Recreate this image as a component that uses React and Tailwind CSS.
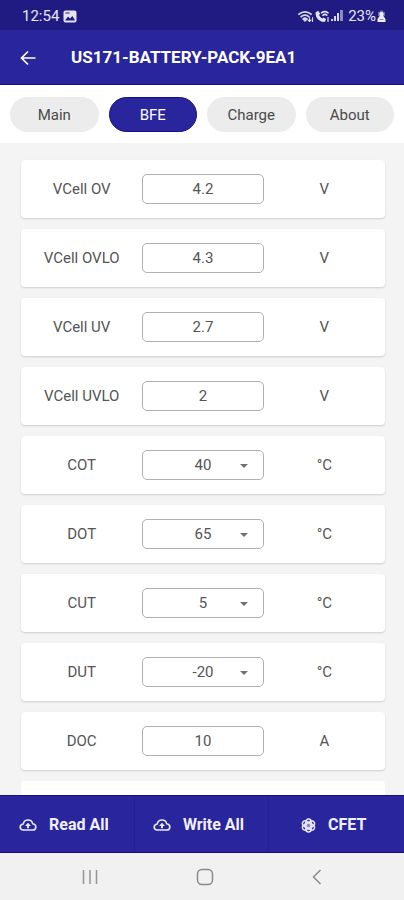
import React from "react";

const tabs = ["Main", "BFE", "Charge", "About"];

const settings = [
  { id: "vcell-ov", label: "VCell OV", value: "4.2", unit: "V" },
  { id: "vcell-ovlo", label: "VCell OVLO", value: "4.3", unit: "V" },
  { id: "vcell-uv", label: "VCell UV", value: "2.7", unit: "V" },
  { id: "vcell-uvlo", label: "VCell UVLO", value: "2", unit: "V" },
  { id: "cot", label: "COT", value: "40", unit: "°C", select: true },
  { id: "dot", label: "DOT", value: "65", unit: "°C", select: true },
  { id: "cut", label: "CUT", value: "5", unit: "°C", select: true },
  { id: "dut", label: "DUT", value: "-20", unit: "°C", select: true },
  { id: "doc", label: "DOC", value: "10", unit: "A" },
];

function PictureIcon() {
  return (
    <svg width="14" height="13" viewBox="0 0 14 13" aria-hidden="true">
      <rect x="0.5" y="0.5" width="13" height="12" rx="2" fill="#e4e3f4" />
      <path d="M2 10.5 5 6.5l2 2 2.5-2.5 2.5 4.5z" fill="#201b82" />
      <path d="M2.5 3h4" stroke="#201b82" strokeWidth="1" />
    </svg>
  );
}

function WifiIcon() {
  return (
    <svg width="16" height="13" viewBox="0 0 16 13" fill="none" stroke="#d9d8ee" strokeWidth="1.8" strokeLinecap="round" aria-hidden="true">
      <path d="M1 4.2C4.5 1 9.5 1 13 4.2" />
      <path d="M3.2 6.7c2.2-2 5.4-2 7.6 0" />
      <path d="M5.3 9c1-.9 2.4-.9 3.4 0L7 10.8z" fill="#d9d8ee" />
      <path d="M11.5 7.5v4M10 10l1.500 1.500L13 10M14.500 11.500v-4" strokeWidth="1.1" />
    </svg>
  );
}

function CallIcon() {
  return (
    <svg width="15" height="13" viewBox="0 0 15 13" fill="none" stroke="#e4e3f4" strokeLinecap="round" aria-hidden="true">
      <path d="M0.5 2.500 3.200 0.800 5.200 3.800 4 5.100c.7 1.500 1.700 2.500 3.200 3.300l1.400-1 2.600 1.900-1.300 2.500c-5 .8-9.700-4-9.400-9.300z" fill="#e4e3f4" stroke="none" />
      <path d="M6.5 2.800c2-1.500 4.500-1.500 6.500 0M8 5.200c1.100-.9 2.600-.9 3.700 0" strokeWidth="1.6" />
      <path d="M13 7.5v4" strokeWidth="1.2" />
    </svg>
  );
}

function SignalIcon() {
  return (
    <svg width="13" height="12" viewBox="0 0 13 12" aria-hidden="true">
      <rect x="0" y="9" width="2" height="2" fill="#d9d8ee" />
      <rect x="3" y="6" width="2" height="5" fill="#d9d8ee" />
      <rect x="6" y="3" width="2" height="8" fill="#d9d8ee" />
      <rect x="9" y="0" width="3" height="11" fill="#8d8abf" />
    </svg>
  );
}

function BatteryIcon() {
  return (
    <svg width="9" height="13" viewBox="0 0 9 13" aria-hidden="true">
      <path d="M3 0.5h3l.5 1.500h1.500v4H1V2h1.500z" fill="#6e6aae" />
      <path d="M4.5 2a2 2 0 0 1 1.500 3.500L8.500 9v3h-8V9L3 5.500a2 2 0 0 1 1.500-3.500z" fill="#eeeef8" />
      <path d="M2.5 9.5h4" stroke="#8d8abf" />
    </svg>
  );
}

function CloudUpIcon() {
  return (
    <svg width="18" height="14" viewBox="0 0 18 14" fill="none" aria-hidden="true">
      <path d="M4.5 12C2.500 12 1.200 10.700 1.200 9S2.500 6.200 4.200 6C4.700 3.500 6.500 2 9 2s4.200 1.400 4.700 3.800c1.900.2 3.100 1.500 3.100 3.100 0 1.800-1.300 3.100-3.300 3.100z" stroke="#e9e8f8" strokeWidth="1.6" strokeLinejoin="round" />
      <path d="M9 4.800 12 8h-2v2.200H8V8H6z" fill="#e9e8f8" />
    </svg>
  );
}

function AtomIcon() {
  return (
    <svg width="15" height="15" viewBox="0 0 14 14" fill="none" stroke="#e9e8f8" strokeWidth="1.4" aria-hidden="true">
      <circle cx="7" cy="7" r="4.5" fill="#8c89cf" stroke="none" />
      <rect x="4.6" y="0.9" width="4.8" height="12.2" rx="2.4" />
      <rect x="4.6" y="0.9" width="4.8" height="12.2" rx="2.4" transform="rotate(60 7 7)" />
      <rect x="4.6" y="0.9" width="4.8" height="12.2" rx="2.4" transform="rotate(120 7 7)" />
    </svg>
  );
}

function StatusBar() {
  return (
    <div className="flex h-[30px] shrink-0 items-center justify-between bg-[#201b82] pt-0.5 pr-[18px] pl-[22px] text-[#e9e8f8]">
      <div className="flex items-center gap-1">
        <span className="text-[15px]">12:54</span>
        <PictureIcon />
      </div>
      <div className="flex items-center gap-px">
        <WifiIcon />
        <CallIcon />
        <SignalIcon />
        <span className="pl-[3px] text-[15px]">23%</span>
        <BatteryIcon />
      </div>
    </div>
  );
}

function Header() {
  return (
    <header className="flex h-[55px] shrink-0 items-center border-b border-[#14108a] bg-[#29259c] pt-0.5 pl-5 text-white">
      <button type="button" aria-label="Back" className="w-[51px]">
        <svg width="16" height="16" viewBox="0 0 16 16" fill="none" stroke="#fff" strokeWidth="1.7" aria-hidden="true">
          <path d="M15.5 8H2M8 1.500 1.500 8 8 14.500" />
        </svg>
      </button>
      <h1 className="text-[17px] font-bold">US171-BATTERY-PACK-9EA1</h1>
    </header>
  );
}

function Tabs() {
  return (
    <nav className="grid shrink-0 grid-cols-4 gap-[10px] bg-white px-[10px] pt-3 pb-[11px]">
      {tabs.map((tab) => (
        <button
          key={tab}
          type="button"
          className={
            tab === "BFE"
              ? "h-[35px] rounded-full border border-[#14108a] bg-[#29259c] pt-0.5 text-[15px] text-white"
              : "h-[35px] rounded-full bg-[#ececec] pt-0.5 text-[15px] text-[#4a4a4a]"
          }
        >
          {tab}
        </button>
      ))}
    </nav>
  );
}

function SettingRow({ item }) {
  return (
    <div className="grid h-[58px] grid-cols-3 items-center rounded-[4px] bg-white text-center text-[15px] text-[#555] shadow-[0_1px_2px_rgba(0,0,0,0.16)]">
      <label htmlFor={item.id}>{item.label}</label>
      {item.select ? (
        <div className="relative">
          <select
            id={item.id}
            defaultValue={item.value}
            className="block h-[30px] w-full appearance-none rounded-[5px] border border-[#b0b0b0] bg-white text-center"
          >
            <option>{item.value}</option>
          </select>
          <svg className="pointer-events-none absolute top-[14px] right-4" width="8" height="4" viewBox="0 0 8 4" aria-hidden="true">
            <path d="M0 0h8L4 4z" fill="#6b7378" />
          </svg>
        </div>
      ) : (
        <input
          id={item.id}
          type="text"
          inputMode="decimal"
          defaultValue={item.value}
          className="block h-[30px] w-full rounded-[5px] border border-[#b0b0b0] bg-white text-center"
        />
      )}
      <span>{item.unit}</span>
    </div>
  );
}

function ActionBar() {
  return (
    <div className="grid h-[58px] shrink-0 grid-cols-3 border-y border-[#14108a] bg-[#29259c] text-base font-bold text-[#f1f0fb]">
      <button type="button" className="flex items-center justify-center gap-3 border-r border-[#241f96] pt-0.5 pr-1.5">
        <CloudUpIcon />
        Read All
      </button>
      <button type="button" className="flex items-center justify-center gap-3 border-r border-[#241f96] pt-0.5 pr-1.5">
        <CloudUpIcon />
        Write All
      </button>
      <button type="button" className="flex items-center justify-center gap-3 pt-0.5 pr-1.5">
        <AtomIcon />
        CFET
      </button>
    </div>
  );
}

function SystemNav() {
  return (
    <div className="flex h-[47px] shrink-0 items-center justify-between bg-[#f1f1f1] px-[82px]">
      <button type="button" aria-label="Recent apps">
        <svg width="16" height="16" viewBox="0 0 16 16" stroke="#959595" strokeWidth="1.5" aria-hidden="true">
          <path d="M1.5 1v14M8 1v14M14.500 1v14" />
        </svg>
      </button>
      <button type="button" aria-label="Home">
        <svg width="18" height="18" viewBox="0 0 18 18" fill="none" stroke="#8a8a8a" strokeWidth="1.5" aria-hidden="true">
          <rect x="1.5" y="1.5" width="15" height="15" rx="4.5" />
        </svg>
      </button>
      <button type="button" aria-label="Go back">
        <svg width="10" height="16" viewBox="0 0 10 16" fill="none" stroke="#8a8a8a" strokeWidth="1.5" aria-hidden="true">
          <path d="M8.5 1 1.500 8l7 7" />
        </svg>
      </button>
    </div>
  );
}

export default function App() {
  return (
    <div className="flex h-screen flex-col font-[Roboto,sans-serif]">
      <StatusBar />
      <Header />
      <Tabs />
      <main className="flex min-h-0 flex-1 flex-col gap-[11px] overflow-y-auto bg-[#f4f4f4] pt-[17px] pr-[19px] pl-[21px] [scrollbar-width:none] *:shrink-0">
        {settings.map((item) => (
          <SettingRow key={item.id} item={item} />
        ))}
        <div className="h-[58px] rounded-[4px] bg-white" />
      </main>
      <ActionBar />
      <SystemNav />
    </div>
  );
}
